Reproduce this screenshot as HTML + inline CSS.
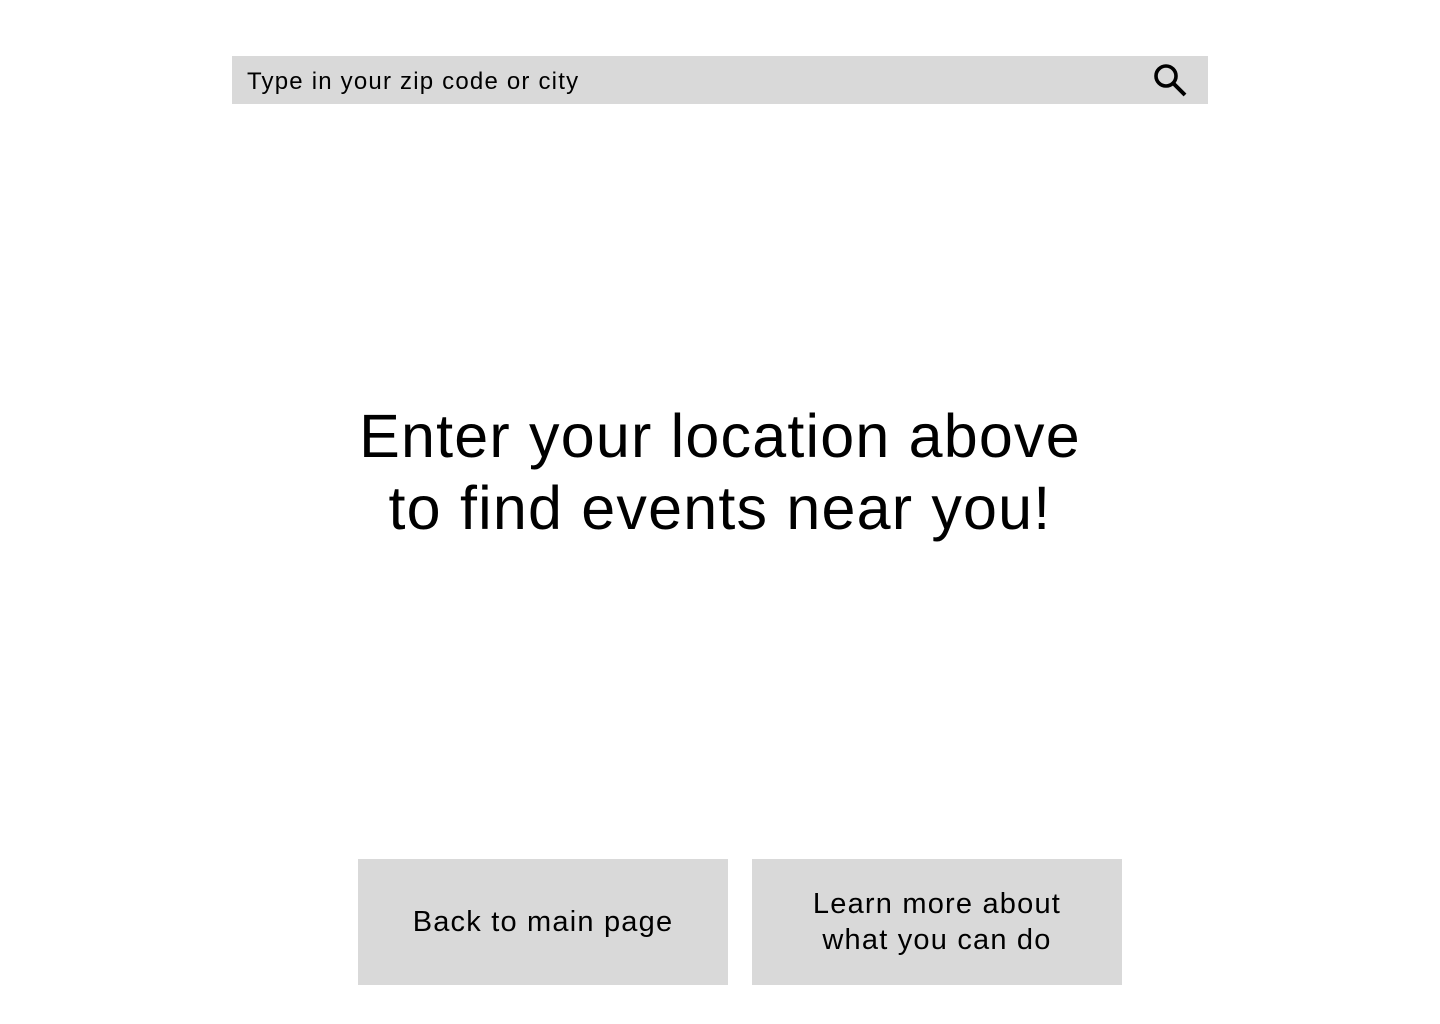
<!DOCTYPE html>
<html><head><style>
body{margin:0;width:1440px;height:1024px;background:#fff;font-family:"Liberation Sans",sans-serif;color:#000;position:relative;overflow:hidden}
.bar{position:absolute;left:232px;top:56px;width:976px;height:48px;background:#d9d9d9}
.bar span{position:absolute;left:15px;top:12px;font-size:24px;line-height:28px;letter-spacing:1.2px}
.h{position:absolute;left:0;width:1440px;top:400px;text-align:center;font-size:61px;line-height:72px;letter-spacing:1.2px}
.btn{position:absolute;top:859px;width:370px;height:126px;background:#d9d9d9;display:flex;align-items:center;justify-content:center;text-align:center;font-size:29px;line-height:36px;letter-spacing:1.2px}
</style></head><body>
<div class="bar"><span>Type in your zip code or city</span>
<svg style="position:absolute;left:912px;top:4px" width="48" height="40" viewBox="0 0 48 40"><circle cx="22" cy="16" r="10" fill="none" stroke="#000" stroke-width="3.6"/><line x1="29" y1="23" x2="41" y2="35" stroke="#000" stroke-width="4"/></svg></div>
<div class="h">Enter your location above<br>to find events near you!</div>
<div class="btn" style="left:358px">Back to main page</div>
<div class="btn" style="left:752px">Learn more about<br>what you can do</div>
</body></html>
